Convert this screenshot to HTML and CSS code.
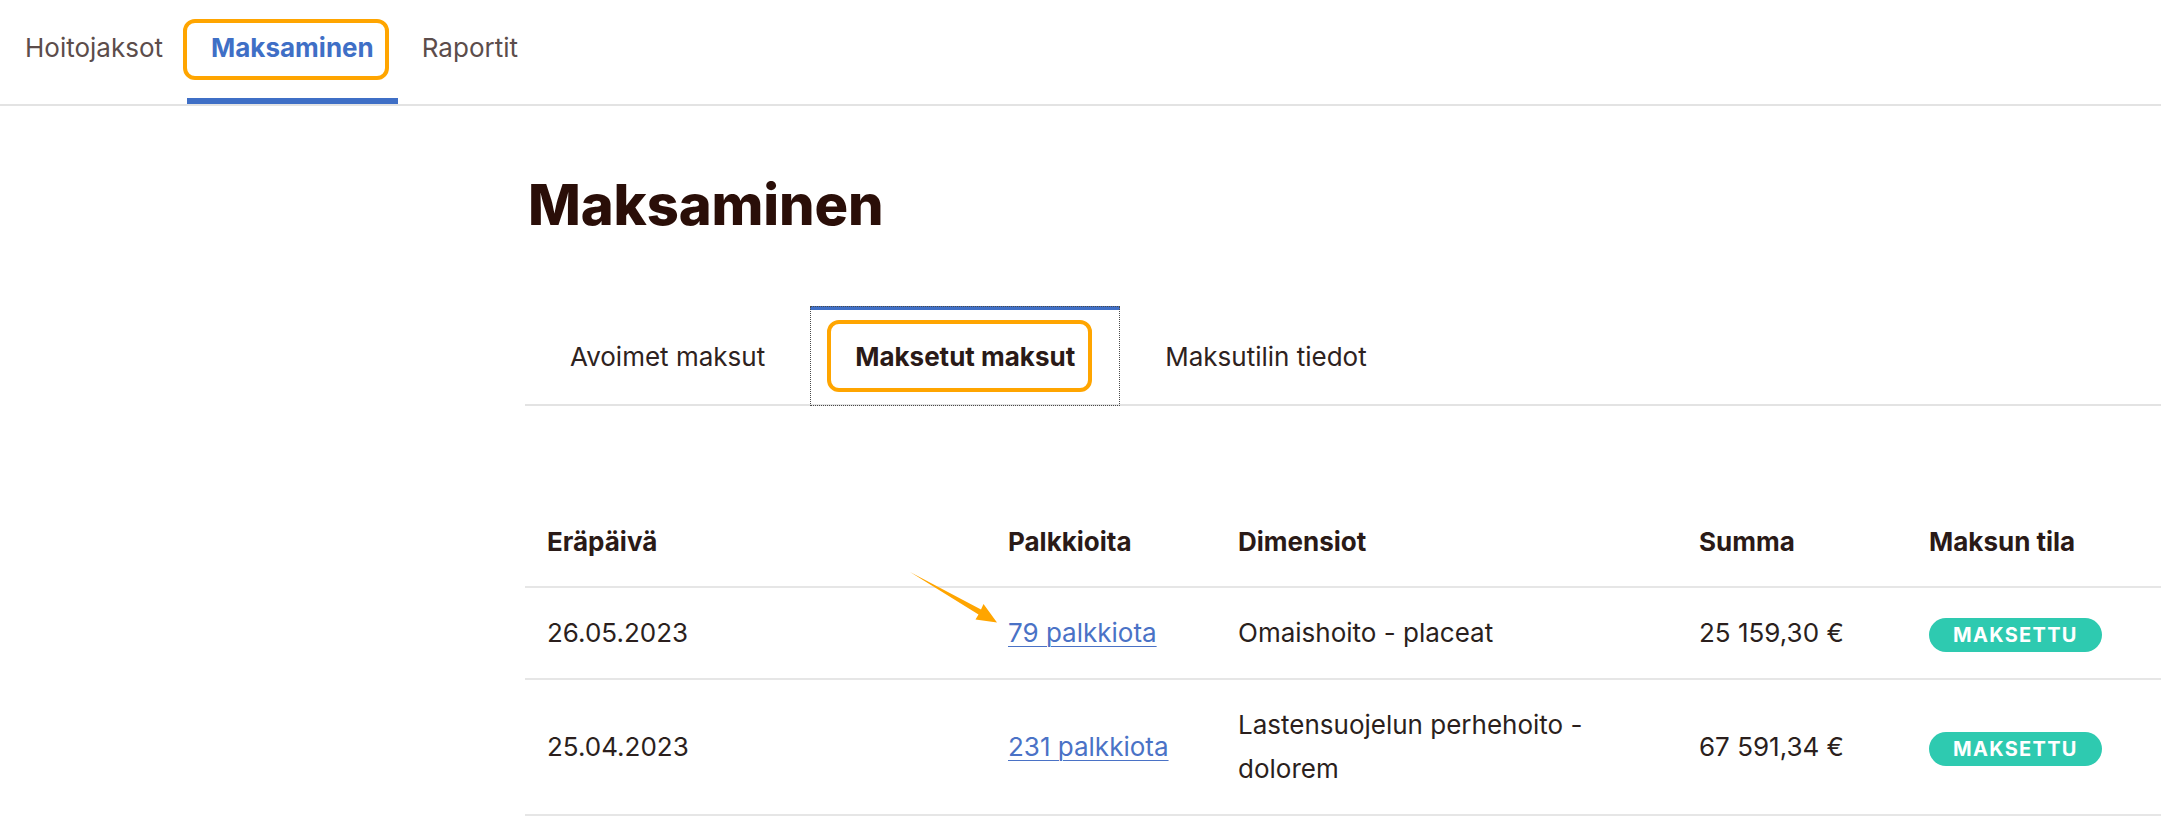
FILE: index.html
```html
<!DOCTYPE html>
<html lang="fi">
<head>
<meta charset="utf-8">
<title>Maksaminen</title>
<link rel="stylesheet" href="styles.css">
</head>
<body>
<nav class="topnav">
  <a class="topnav__item" href="#">Hoitojaksot</a>
  <a class="topnav__item topnav__item--active" href="#">Maksaminen</a>
  <a class="topnav__item" href="#">Raportit</a>
</nav>

<main class="page">
  <h1 class="page__title">Maksaminen</h1>

  <div class="tabs">
    <a class="tab" href="#">Avoimet maksut</a>
    <a class="tab tab--active" href="#">Maksetut maksut</a>
    <a class="tab" href="#">Maksutilin tiedot</a>
  </div>

  <table class="payments">
    <colgroup>
      <col class="col-wide">
      <col class="col-narrow">
      <col class="col-wide">
      <col class="col-narrow">
      <col>
    </colgroup>
    <thead>
      <tr>
        <th>Eräpäivä</th>
        <th>Palkkioita</th>
        <th>Dimensiot</th>
        <th>Summa</th>
        <th>Maksun tila</th>
      </tr>
    </thead>
    <tbody>
      <tr>
        <td>26.05.2023</td>
        <td><a class="link" href="#">79 palkkiota</a></td>
        <td>Omaishoito - placeat</td>
        <td>25 159,30 €</td>
        <td><span class="badge">Maksettu</span></td>
      </tr>
      <tr>
        <td>25.04.2023</td>
        <td><a class="link" href="#">231 palkkiota</a></td>
        <td>Lastensuojelun perhehoito - dolorem</td>
        <td>67 591,34 €</td>
        <td><span class="badge">Maksettu</span></td>
      </tr>
    </tbody>
  </table>
</main>

<svg class="annotation-arrow" width="110" height="70" viewBox="900 560 110 70" aria-hidden="true">
  <polygon points="910,572 981,609.5 983.5,604 997,622.5 975.5,619.5 978.5,614.5" fill="#ffa500"/>
</svg>
</body>
</html>
```

FILE: styles.css
```css
*,
*::before,
*::after {
  box-sizing: border-box;
}

html, body {
  margin: 0;
  padding: 0;
  background: #ffffff;
  overflow: hidden;
}

body {
  font-family: Inter, "Noto Sans", "Liberation Sans", sans-serif;
  color: #2b1f1d;
  position: relative;
  width: 2161px;
  height: 821px;
}

/* ---------- top navigation ---------- */
.topnav {
  display: flex;
  padding-left: 1px;
  border-bottom: 2px solid #e3e3e3;
}

.topnav__item {
  position: relative;
  display: block;
  height: 104px;
  padding: 33px 24px 0;
  border-bottom: 6px solid transparent;
  font-size: 26px;
  line-height: 30px;
  color: #5c4d4b;
  text-decoration: none;
}

.topnav__item--active {
  color: #3f6fc6;
  font-weight: 700;
  border-bottom-color: #3f6fc6;
}

.topnav__item--active::after {
  content: "";
  position: absolute;
  left: -4px;
  top: 19px;
  width: 206px;
  height: 61px;
  border: 4px solid #ffa500;
  border-radius: 12px;
}

/* ---------- page ---------- */
.page {
  margin-left: 525px;
  width: 1636px;
}

.page__title {
  margin: 65px 0 0 3px;
  font-size: 56px;
  line-height: 68px;
  font-weight: 800;
  color: #2a0e08;
  letter-spacing: -0.1px;
}

/* ---------- tabs ---------- */
.tabs {
  display: flex;
  margin-top: 67px;
  border-bottom: 2px solid #e3e3e3;
}

.tab {
  position: relative;
  display: block;
  margin-bottom: -2px;
  padding: 32px 45px 34px;
  border-top: 4px solid transparent;
  font-size: 26px;
  line-height: 30px;
  color: #2e2220;
  text-decoration: none;
}

.tab--active {
  font-weight: 700;
  color: #2a1a17;
  border-top-color: #3f6fc6;
  outline: 1px dotted #4a4a4a;
  outline-offset: -1px;
}

.tab--active::after {
  content: "";
  position: absolute;
  left: 17px;
  top: 10px;
  width: 265px;
  height: 72px;
  border: 4px solid #ffa500;
  border-radius: 12px;
}

/* ---------- table ---------- */
.payments {
  margin-top: 92px;
  width: 1636px;
  border-collapse: collapse;
  table-layout: fixed;
  font-size: 26px;
  line-height: 44px;
}

.col-wide {
  width: 461px;
}

.col-narrow {
  width: 230px;
}

.payments th {
  padding: 22px 22px;
  text-align: left;
  font-weight: 700;
  color: #2a1a17;
  border-bottom: 2px solid #e6e6e6;
}

.payments td {
  padding: 23px 22px;
  vertical-align: middle;
  color: #2b1f1d;
  border-bottom: 2px solid #e6e6e6;
}

.link {
  color: #4a72c6;
  text-decoration: underline;
  text-underline-offset: 4px;
  text-decoration-thickness: 1px;
}

.badge {
  display: inline-block;
  height: 34px;
  padding: 0 24px;
  border-radius: 17px;
  background: #2ecab0;
  color: #ffffff;
  font-size: 20px;
  line-height: 34px;
  font-weight: 700;
  letter-spacing: 1.3px;
  text-transform: uppercase;
  vertical-align: middle;
}

/* ---------- annotation ---------- */
.annotation-arrow {
  position: absolute;
  left: 900px;
  top: 560px;
}
```
